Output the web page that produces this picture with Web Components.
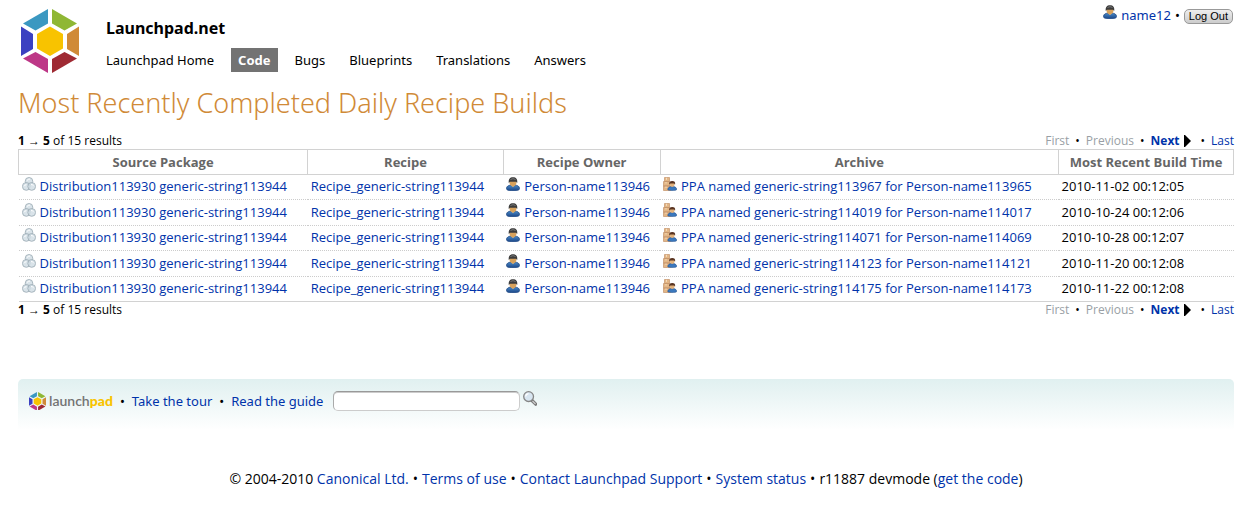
<!DOCTYPE html>
<html lang="en">
<head>
<meta charset="utf-8">
<title>Most Recently Completed Daily Recipe Builds</title>
<style>
  body { margin: 0; background: #fff; color: #000; font: 13px/16px "Noto Sans", "Open Sans", sans-serif; }
</style>
</head>
<body>
<lp-page>
  <lp-header slot="header" user="name12"></lp-header>
  <lp-builds></lp-builds>
  <lp-footer slot="footer"></lp-footer>
</lp-page>
<script>
const base = `
  * { box-sizing: border-box; }
  a { color: #03a; text-decoration: none; }
  a:hover { text-decoration: underline; }
`;

function define(name, css, html) {
  customElements.define(name, class extends HTMLElement {
    constructor() {
      super();
      const t = document.createElement('template');
      const markup = typeof html === 'function' ? html(this) : html;
      t.innerHTML = `<style>${base}${css}</style>${markup}`;
      this.attachShadow({ mode: 'open' }).append(t.content.cloneNode(true));
    }
  });
}

const icons = {
  person: `<svg width="14" height="14" viewBox="0 0 14 14">
    <defs><linearGradient id="b" x2="0" y2="1"><stop stop-color="#4b8bc9"/><stop offset="1" stop-color="#1b4687"/></linearGradient></defs>
    <path d="M.5 11.5C.5 9 2.500 8.500 5 8h4c2.500.5 4.500 1 4.500 3.500 0 2-3 2.200-6.500 2.200S.5 13.500.5 11.500z" fill="url(#b)" stroke="#204a87" stroke-width=".8"/>
    <path d="M4.800 8 7 10.200 9.200 8z" fill="#e0b070"/>
    <ellipse cx="7" cy="5.800" rx="3.400" ry="3.300" fill="#d8a25c"/>
    <path d="M2.800 6C2.200 2.200 4 .3 7 .3s4.800 1.900 4.200 5.700L10 4.700H4z" fill="#3c3c3c"/>
    <path d="M4.500 2.500Q7 .8 9.500 2.500" fill="none" stroke="#777"/></svg>`,
  distribution: `<svg width="14" height="14" viewBox="0 0 14 14">
    <g fill="#d0dce4" fill-opacity=".8" stroke="#9aa9b3" stroke-width=".8"><circle cx="7" cy="4.300" r="3.800"/><circle cx="4.300" cy="9.400" r="3.900"/><circle cx="9.700" cy="9.400" r="3.900"/></g>
    <path d="M5 3.500Q6 2 8 2M2.500 9q.5-1.500 2-1.500M9 7.500q1.500 0 2.500 1" fill="none" stroke="#fff" stroke-width="1"/></svg>`,
  ppa: `<svg width="14" height="14" viewBox="0 0 14 14">
    <path d="M1.500.5h5v4h-5zM.5 4.500h6v4.500h-6zM.5 9h7v4.500h-7z" fill="#e3b685" stroke="#c4946a" stroke-width=".7"/>
    <path d="M3.500.8v2M3 5v1.500M3 9.500V11" stroke="#f4ddc0"/>
    <path d="M4.800 12.600c0-2 1.500-2.600 3-3h3c1.500.4 2.900 1.100 2.900 3 0 1.200-8.900 1.200-8.900 0z" fill="#3b78bd" stroke="#1f4d8b" stroke-width=".6"/>
    <circle cx="9.200" cy="7.600" r="2.400" fill="#e2b27c"/><path d="M6.300 7.600C5.900 5 7 4 9.200 4s3.400 1 2.900 3.600L11 6.600H7.500z" fill="#5a3420"/>
    </svg>`,
  search: `<svg width="14" height="15" viewBox="0 0 14 15">
    <path d="m8.500 9 4.200 4.200" stroke="#777" stroke-width="3.200" stroke-linecap="round"/><path d="m9.500 10 3 3" stroke="#ccc" stroke-width="1.200"/>
    <circle cx="5.600" cy="5.600" r="4.900" fill="#d8e6f1" stroke="#858585" stroke-width="1.300"/><path d="M2.700 5.500q.2-2.500 2.800-2.900" stroke="#fff" fill="none" stroke-width="1.200"/></svg>`,
};

define('lp-icon', `
  :host { display: inline-block; vertical-align: -1px; }
  svg { display: block; }
`, el => icons[el.getAttribute('name')]);

define('lp-logo', `
  :host { display: block; }
  svg { display: block; width: 100%; height: auto; }
`, `<svg viewBox="0 0 58 64" role="img" aria-label="Launchpad">
  <path d="M27 0v14.500L14.500 21.500 2 14.500z" fill="#3b98c1"/>
  <path d="M31 0v14.500L43.500 21.500 56 14.500z" fill="#8fb734"/>
  <path d="M0 17.500 12 25v15L0 47z" fill="#3b41c1"/>
  <path d="M58 17.500 46 25v15l12 7z" fill="#d08a37"/>
  <path d="M27 64V50L14.500 43 2 49.500z" fill="#bd3787"/>
  <path d="M31 64V50l12.500-7L56 49.500z" fill="#9f2a33"/>
  <path d="M29 17.500 42 25v14.500L29 47l-13-7.500V25z" fill="#f8c300"/></svg>`);

define('lp-page', `
  :host { display: block; padding: 0 7px 0 18px; }
  main { padding-top: 14px; }
`, `<slot name="header"></slot><main><slot></slot></main><slot name="footer"></slot>`);

define('lp-header', `
  :host { display: flex; align-items: flex-start; }
  lp-logo { width: 58px; margin: 9px 27px 0 3px; }
  .mid { flex: 1; padding-top: 18px; }
  .site { font-size: 16px; line-height: 20px; font-weight: 700; }
  nav { display: flex; gap: 10px; margin: 10px 0 0 -7px; }
  nav a { color: #000; line-height: 24px; padding: 0 7px; }
  nav a.on { background: #737373; color: #fff; font-weight: 700; }
  form { display: flex; align-items: center; gap: 4px; padding: 5px 1px 0 0; line-height: 20px; }
  lp-icon { margin-right: 4px; vertical-align: 1px; }
  button { margin-top: 2px; font: 11px/13px "Liberation Sans", sans-serif; height: 15px; padding: 0 4px; border: 1px solid #999; border-radius: 5px; background: linear-gradient(#eee, #ccc); color: #000; }
`, el => `<lp-logo></lp-logo>
  <div class="mid"><div class="site">Launchpad.net</div>
  <nav><a href="#">Launchpad Home</a><a href="#" class="on">Code</a><a href="#">Bugs</a><a href="#">Blueprints</a><a href="#">Translations</a><a href="#">Answers</a></nav></div>
  <form onsubmit="return false"><span><lp-icon name="person"></lp-icon><a href="#">${el.getAttribute('user')}</a></span><span>•</span><button>Log Out</button></form>`);

define('lp-batch-nav', `
  :host { display: flex; justify-content: space-between; font: 12px/16px "Open Sans", sans-serif; }
  .links { display: flex; gap: 6px; }
  .off { color: #999fa5; }
  .next { display: flex; align-items: center; gap: 4px; font-weight: 700; margin-right: 4px; }
  svg { display: block; }
`, `<div><b>1</b> → <b>5</b> of 15 results</div>
  <div class="links"><span class="off">First</span><span>•</span><span class="off">Previous</span><span>•</span><a href="#" class="next">Next<svg width="7" height="12"><path d="M0 0h1l6 6-6 6H0z"/></svg></a><span>•</span><a href="#">Last</a></div>`);

const builds = [
  ['113967', '113965', '2010-11-02 00:12:05'],
  ['114019', '114017', '2010-10-24 00:12:06'],
  ['114071', '114069', '2010-10-28 00:12:07'],
  ['114123', '114121', '2010-11-20 00:12:08'],
  ['114175', '114173', '2010-11-22 00:12:08'],
];

define('lp-builds', `
  :host { display: block; }
  h1 { margin: 0 0 14px; font-size: 27px; line-height: 32px; font-weight: 300; color: #d08a37; }
  table { width: 100%; table-layout: fixed; border-collapse: collapse; font-family: "Open Sans", sans-serif; }
  .c1 { width: 23.8%; } .c2 { width: 16.1%; } .c3 { width: 12.9%; } .c4 { width: 32.8%; }
  th { height: 25px; padding: 0; border: 1px solid #d2d2d2; color: #666; font-weight: 700; line-height: 16px; }
  td { height: 25px; padding: 0 3px 2px; border-bottom: 1px dotted #ccc; line-height: 16px; white-space: nowrap; }
  tr:nth-child(even) td { height: 26px; }
  tr:last-child td { border-bottom: 1px solid #d2d2d2; }
  lp-icon { margin: -4px 4px 0 0; vertical-align: 0; }
`, `<h1>Most Recently Completed Daily Recipe Builds</h1>
  <lp-batch-nav></lp-batch-nav>
  <table>
    <colgroup><col class="c1"><col class="c2"><col class="c3"><col class="c4"><col></colgroup>
    <thead><tr><th>Source Package</th><th>Recipe</th><th>Recipe Owner</th><th>Archive</th><th>Most Recent Build Time</th></tr></thead>
    <tbody>${builds.map(([ppa, owner, time]) => `<tr>
      <td><lp-icon name="distribution"></lp-icon><a href="#">Distribution113930 generic-string113944</a></td>
      <td><a href="#">Recipe_generic-string113944</a></td>
      <td><lp-icon name="person"></lp-icon><a href="#">Person-name113946</a></td>
      <td><lp-icon name="ppa"></lp-icon><a href="#">PPA named generic-string${ppa} for Person-name${owner}</a></td>
      <td>${time}</td></tr>`).join('')}</tbody>
  </table>
  <lp-batch-nav></lp-batch-nav>`);

define('lp-footer', `
  :host { display: block; line-height: 20px; }
  .bar { display: flex; align-items: center; gap: 7px; height: 51px; margin-top: 61px; padding: 0 11px 7px; border-radius: 5px 5px 0 0; background: linear-gradient(#e0f0f0, #fff); }
  .brand { display: flex; align-items: center; gap: 3px; font: 14px/18px Lato, sans-serif; color: #737373; }
  .brand span { font-weight: 600; }
  .brand b { color: #f8c300; }
  lp-logo { width: 17px; }
  form { display: flex; align-items: center; gap: 3px; margin-left: 3px; }
  input { width: 187px; height: 20px; padding: 0 5px; font: inherit; background: #fff; border: 1px solid #ccc; border-top-color: #999; border-left-color: #aaa; box-shadow: inset 0 1px 0 #ccc; border-radius: 5px; }
  button { padding: 0 0 3px; border: 0; background: none; }
  p { display: flex; justify-content: center; gap: 4px; margin: 39px 0 0; font: 14px/20px "Open Sans", sans-serif; }
`, `<div class="bar"><a class="brand" href="#"><lp-logo></lp-logo><span>launch<b>pad</b></span></a><span>•</span><a href="#">Take the tour</a><span>•</span><a href="#">Read the guide</a>
  <form onsubmit="return false"><input type="text" aria-label="Search Launchpad"><button aria-label="Search"><lp-icon name="search"></lp-icon></button></form></div>
  <p><span>© 2004-2010 <a href="#">Canonical Ltd.</a></span><span>•</span><a href="#">Terms of use</a><span>•</span><a href="#">Contact Launchpad Support</a><span>•</span><a href="#">System status</a><span>•</span><span>r11887 devmode (<a href="#">get the code</a>)</span></p>`);
</script>
</body>
</html>
